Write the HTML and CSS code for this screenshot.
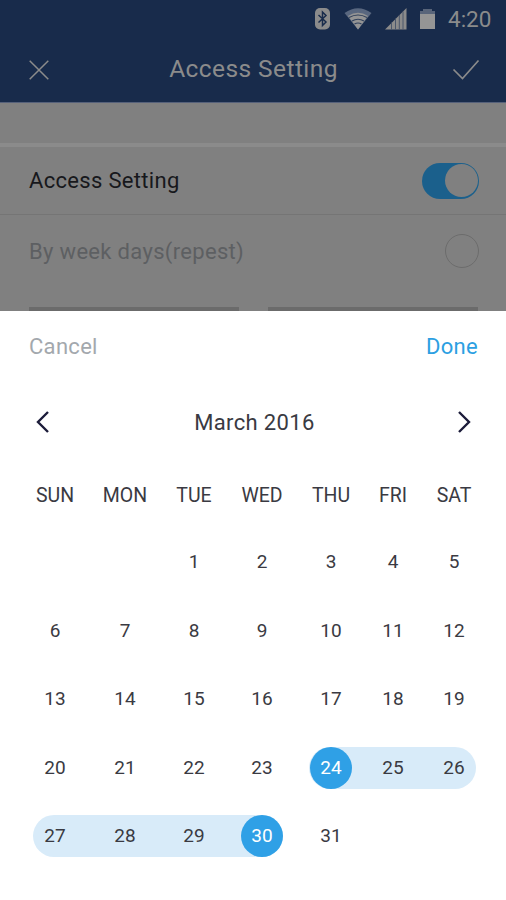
FILE: index.html
```html
<!DOCTYPE html>
<html lang="en">
<head>
<meta charset="utf-8">
<title>Access Setting</title>
<link rel="stylesheet" href="styles.css">
</head>
<body>
<header class="top">
  <div class="status">
    <svg class="bt" width="15" height="22" viewBox="0 0 15 22"><rect width="15" height="21.5" rx="5" fill="#8b8b8b"/><path d="M3.5 7 L11 14 L7.5 17.5 V4 L11 7.5 L3.5 14.5" fill="none" stroke="#182b4b" stroke-width="1.5"/></svg>
    <svg class="wifi" width="28" height="22" viewBox="0 0 28 22"><path d="M0.5 5 Q14 -4.5 27.5 5 L14 21.5Z" fill="#59677f"/><path d="M4 8 Q14 1.5 24 8 L14 21.5Z" fill="#949494"/><path d="M5 9.5 Q14 4.5 23 9.5 M8 13 Q14 9.5 20 13 M10.5 16 Q14 14 17.5 16" fill="none" stroke="#31415c" stroke-width="1.2"/></svg>
    <svg class="signal" width="22" height="22" viewBox="0 0 22 22"><path d="M0 21.5 L21.5 0 V21.5Z" fill="#8b8b8b"/><path d="M6.5 14.5 V22 M10.5 10.5 V22 M14.3 7 V22 M18 3.5 V22" stroke="#4a566b" stroke-width="1"/></svg>
    <svg class="battery" width="15" height="22" viewBox="0 0 15 22"><path d="M3 1 H12 V3 H15 V7 H0 V3 H3Z" fill="#59657a"/><path d="M0 6 H15 V21 H0Z" fill="#959595"/></svg>
    <span class="clock">4:20</span>
  </div>
  <div class="bar">
    <svg width="20" height="20" viewBox="0 0 20 20"><path d="M.7 .7 L19.3 19.3 M19.3 .7 L.7 19.3" fill="none" stroke="#8b8b8b" stroke-width="1.5"/></svg>
    <h1 class="title">Access Setting</h1>
    <svg width="28" height="22" viewBox="0 0 28 22"><path d="M1.5 10.5 L10.5 19.5 L26.5 1.5" fill="none" stroke="#8b8b8b" stroke-width="1.7"/></svg>
  </div>
</header>
<main class="settings">
  <div class="spacer"></div>
  <div class="setting"><span class="name on">Access Setting</span><span class="switch"><i class="knob"></i></span></div>
  <div class="setting last"><span class="name repeat">By week days(repest)</span><span class="radio"></span></div>
  <div class="fields"><span></span><span></span></div>
</main>
<section class="sheet">
  <div class="actions"><span class="cancel">Cancel</span><span class="done">Done</span></div>
  <div class="month">
    <svg width="14" height="22" viewBox="0 0 14 22"><path d="M12 1 L2 11 L12 21" fill="none" stroke="#1c1c3a" stroke-width="2.4"/></svg>
    <h2 class="month-name">March 2016</h2>
    <svg width="14" height="22" viewBox="0 0 14 22"><path d="M2 1 L12 11 L2 21" fill="none" stroke="#1c1c3a" stroke-width="2.4"/></svg>
  </div>
  <div class="week days"><span>SUN</span><span>MON</span><span>TUE</span><span>WED</span><span>THU</span><span>FRI</span><span>SAT</span></div>
  <div class="week"><span></span><span></span><span>1</span><span>2</span><span>3</span><span>4</span><span>5</span></div>
  <div class="week"><span>6</span><span>7</span><span>8</span><span>9</span><span>10</span><span>11</span><span>12</span></div>
  <div class="week"><span>13</span><span>14</span><span>15</span><span>16</span><span>17</span><span>18</span><span>19</span></div>
  <div class="week"><i class="range from"></i><span>20</span><span>21</span><span>22</span><span>23</span><span class="picked">24</span><span>25</span><span>26</span></div>
  <div class="week"><i class="range to"></i><span>27</span><span>28</span><span>29</span><span class="picked">30</span><span>31</span><span></span><span></span></div>
</section>
</body>
</html>
```
FILE: styles.css
```css
* { box-sizing: border-box; }
body {
  margin: 0;
  width: 506px;
  height: 900px;
  overflow: hidden;
  display: flex;
  flex-direction: column;
  background: #fff;
  font-family: Roboto, sans-serif;
  color: #3a3a42;
}
svg { display: block; flex: none; }
h1, h2 { margin: 0; font-weight: 400; }
.top { height: 103px; background: #182b4b; color: #8b8b8b; flex: none; border-bottom: 1px solid #56617a; }
.status { height: 37px; display: flex; align-items: center; justify-content: flex-end; padding: 0 14px 0 0; }
.bt { margin-right: 14px; }
.wifi { margin-right: 13px; }
.signal { margin-right: 13px; }
.battery { margin-right: 13px; }
.clock { width: 44px; font-size: 22.5px; line-height: 37px; padding-top: 2px; white-space: nowrap; }
.bar { height: 65px; display: flex; align-items: center; justify-content: space-between; padding: 0 26px 0 29px; }
.title { font-size: 24.5px; letter-spacing: .42px; position: relative; left: 3px; top: -1px; }
.settings { height: 208px; flex: none; background: #808080; display: flex; flex-direction: column; }
.spacer { height: 44px; border-bottom: 4px solid #8b8b8b; flex: none; }
.setting { height: 68px; flex: none; display: flex; align-items: center; justify-content: space-between; padding: 0 27px 0 29px; border-bottom: 1px solid #757575; }
.setting.last { height: 72px; border: 0; }
.name { font-size: 22px; letter-spacing: .32px; white-space: nowrap; }
.on { color: #17181c; }
.repeat { color: #5d5f62; }
.switch { width: 57px; height: 36px; border-radius: 18px; background: #1b608c; display: flex; justify-content: flex-end; align-items: center; padding-right: 1px; }
.knob { width: 33px; height: 33px; border-radius: 50%; background: #808080; }
.radio { width: 34px; height: 34px; border-radius: 50%; border: 1px solid #6c6c6c; }
.fields { display: grid; grid-template-columns: 210px 210px; gap: 29px; padding: 0 29px; margin-top: auto; }
.fields span { height: 4px; background: #6b6b6b; }
.sheet { height: 589px; background: #fff; }
.actions { height: 70px; display: flex; align-items: center; justify-content: space-between; padding: 0 28px 0 29px; font-size: 22px; }
.cancel { color: #a3a8ad; letter-spacing: .3px; }
.done { color: #2c9fe2; letter-spacing: .3px; }
.month { height: 82px; display: flex; align-items: center; justify-content: space-between; padding: 0 35px 0 36px; }
.month-name { font-size: 22px; letter-spacing: .35px; position: relative; left: 1px; }
.week {
  height: 68.5px;
  display: grid;
  grid-template-columns: 70px 70px 68px 68px 70px 54px 68px;
  align-items: center;
  justify-items: center;
  padding-left: 20px;
  font-size: 19px;
}
.week span { grid-row: 1; line-height: 42px; z-index: 1; }
.week span:nth-of-type(1) { grid-column: 1; }
.week span:nth-of-type(2) { grid-column: 2; }
.week span:nth-of-type(3) { grid-column: 3; }
.week span:nth-of-type(4) { grid-column: 4; }
.week span:nth-of-type(5) { grid-column: 5; }
.week span:nth-of-type(6) { grid-column: 6; }
.week span:nth-of-type(7) { grid-column: 7; }
.days { height: 65px; font-size: 19.5px; }
.range { grid-row: 1; height: 42px; border-radius: 21px; background: #d8ebf9; justify-self: stretch; }
.from { grid-column: 5 / 8; margin: 0 12px 0 13px; }
.to { grid-column: 1 / 5; margin: 0 13px; }
.week .picked { width: 42px; height: 42px; border-radius: 50%; background: #2fa0e6; color: #fff; text-align: center; }
```
